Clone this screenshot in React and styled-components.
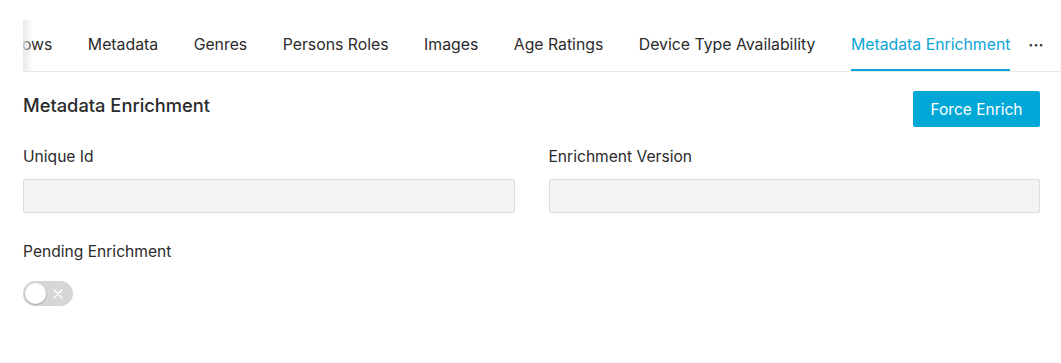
import React from "react";
import styled, { createGlobalStyle } from "styled-components";

const Global = createGlobalStyle`
  html, body { margin: 0; padding: 0; background: #fff; }
  body { font-family: Inter, "Noto Sans", sans-serif; color: #2b2b2b; }
  * { box-sizing: border-box; }
`;

const Page = styled.div`
  padding: 20px 0 0 23px;
  width: 1061px;
`;

const TabBar = styled.div`
  display: flex;
  align-items: stretch;
  height: 52px;
  border-bottom: 1px solid #e8e8e8;
`;

const TabScroller = styled.div`
  position: relative;
  flex: 1;
  overflow: hidden;
  display: flex;
`;

const ScrollShadow = styled.div`
  position: absolute;
  left: 0;
  top: 0;
  bottom: 0;
  width: 10px;
  background: linear-gradient(to right, rgba(228,228,228,0.85), rgba(255,255,255,0));
  pointer-events: none;
`;

const TabList = styled.div`
  display: flex;
  gap: 35.5px;
  margin-left: ${(p) => p.$offset}px;
  padding-bottom: 2px;
  flex-shrink: 0;
`;

const Tab = styled.div`
  position: relative;
  display: flex;
  align-items: center;
  font-size: 15.8px;
  white-space: nowrap;
  color: ${(p) => (p.$active ? "#0aa5d7" : "#2b2b2b")};
  &::after {
    content: "";
    position: absolute;
    left: 0;
    right: 0;
    bottom: -3px;
    height: 3px;
    background: ${(p) => (p.$active ? "#0aa5d7" : "transparent")};
  }
`;

const More = styled.div`
  width: 45px;
  display: flex;
  align-items: center;
  justify-content: center;
  padding-bottom: 2px;
  padding-right: 5px;
  font-size: 16px;
  font-weight: 600;
  color: #333;
`;

const Content = styled.div`
  padding-right: 21px;
`;

const HeaderRow = styled.div`
  display: flex;
  justify-content: space-between;
  align-items: flex-start;
  margin-top: 19px;
`;

const Heading = styled.h2`
  margin: 0;
  padding-top: 1px;
  font-size: 18.3px;
  line-height: 26px;
  font-weight: 500;
  color: #2b2b2b;
`;

const Button = styled.button`
  height: 36px;
  width: 127px;
  border: none;
  border-radius: 2px;
  background: #00a8d8;
  color: #fff;
  font-family: inherit;
  font-size: 15.5px;
  cursor: pointer;
`;

const FieldGrid = styled.div`
  display: grid;
  grid-template-columns: 1fr 1fr;
  column-gap: 34px;
  margin-top: 18px;
`;

const Field = styled.div`
  display: flex;
  flex-direction: column;
`;

const Label = styled.label`
  font-size: 15.6px;
  line-height: 22px;
  padding-top: 1px;
  color: #2b2b2b;
`;

const Input = styled.div`
  margin-top: 11px;
  height: 34px;
  background: #f3f3f3;
  border: 1px solid #dcdcdc;
  border-radius: 2px;
`;

const ToggleField = styled.div`
  margin-top: 27px;
  display: flex;
  flex-direction: column;
  align-items: flex-start;
  gap: 18px;
`;

const Toggle = styled.div`
  position: relative;
  width: 50px;
  height: 25px;
  border-radius: 13px;
  background: #d6d6d6;
  display: flex;
  align-items: center;
  justify-content: flex-end;
  padding-right: 10px;
`;

const Knob = styled.div`
  position: absolute;
  left: 2px;
  top: 2px;
  width: 21px;
  height: 21px;
  border-radius: 50%;
  background: #fff;
  box-shadow: 0 1px 2px rgba(0,0,0,0.25);
`;

const tabs = [
  "Windows",
  "Metadata",
  "Genres",
  "Persons Roles",
  "Images",
  "Age Ratings",
  "Device Type Availability",
  "Metadata Enrichment",
];

export default function App() {
  return (
    <>
      <Global />
      <Page>
        <TabBar>
          <TabScroller>
            <TabList $offset={-39.5}>
              {tabs.map((t) => (
                <Tab key={t} $active={t === "Metadata Enrichment"}>
                  {t}
                </Tab>
              ))}
            </TabList>
            <ScrollShadow />
          </TabScroller>
          <More>···</More>
        </TabBar>
        <Content>
          <HeaderRow>
            <Heading>Metadata Enrichment</Heading>
            <Button>Force Enrich</Button>
          </HeaderRow>
          <FieldGrid>
            <Field>
              <Label>Unique Id</Label>
              <Input />
            </Field>
            <Field>
              <Label>Enrichment Version</Label>
              <Input />
            </Field>
          </FieldGrid>
          <ToggleField>
            <Label>Pending Enrichment</Label>
            <Toggle>
              <Knob />
              <svg width="10" height="10" viewBox="0 0 10 10">
                <path d="M1 1L9 9M9 1L1 9" stroke="#fff" strokeWidth="1.4" strokeLinecap="round" />
              </svg>
            </Toggle>
          </ToggleField>
        </Content>
      </Page>
    </>
  );
}
